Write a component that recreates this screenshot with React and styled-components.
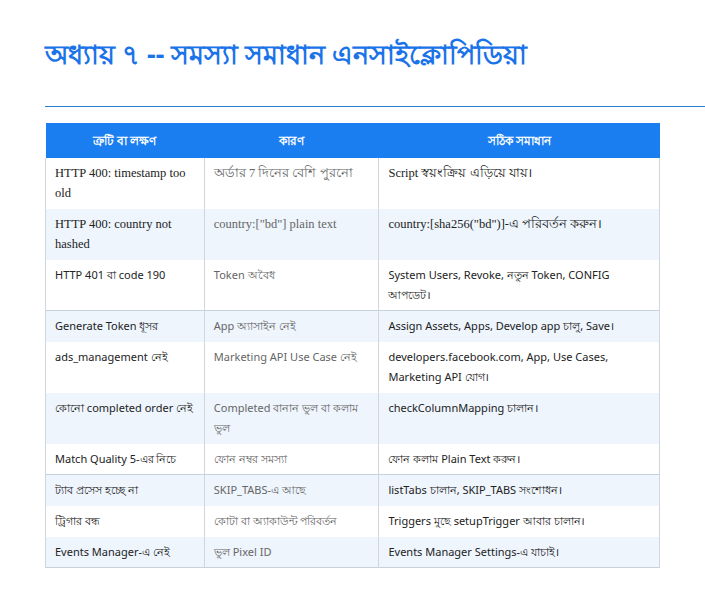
import React from "react";
import styled, { createGlobalStyle } from "styled-components";

const G = createGlobalStyle`
  body { margin: 0; background: #fff; font-family: "Noto Sans", "Open Sans", sans-serif; }
`;
const Page = styled.div`
  padding: 34px 0 0 45px;
`;
const Title = styled.h1`
  margin: 0;
  font-family: "Noto Sans", sans-serif;
  font-weight: 700;
  font-size: 27px;
  line-height: 40px;
  color: #1a73e8;
`;
const Rule = styled.hr`
  margin: 32px 0 16px 0;
  border: 0;
  border-top: 1px solid #2a7fd4;
`;
const Table = styled.table`
  width: 615px;
  border-collapse: collapse;
  line-height: 20px;
`;
const Th = styled.th`
  background: #1a7ef0;
  color: #fff;
  font-weight: 700;
  font-size: 11.5px;
  height: 35px;
  padding: 0 8px;
  text-align: center;
`;
const Tr = styled.tr`
  background: ${(p) => (p.$alt ? "#eef5fd" : "#fff")};
  border-bottom: 1px solid ${(p) => (p.$line ? "#c8d2dc" : "transparent")};
`;
const Td = styled.td`
  vertical-align: top;
  padding: 5px 6px 5px 9px;
  color: ${(p) => (p.$muted ? "#666" : "#222")};
  border-left: 1px solid #d0d6dc;
  border-right: 1px solid #d0d6dc;
  font-family: ${(p) => (p.$serif ? '"Liberation Serif", "Noto Sans", serif' : '"Noto Sans", sans-serif')};
  font-size: ${(p) => (p.$serif ? "12.5px" : "11px")};
`;

const rows = [
  ["HTTP 400: timestamp too old", "অর্ডার 7 দিনের বেশি পুরনো", "Script স্বয়ংক্রিয় এড়িয়ে যায়।", 1],
  ["HTTP 400: country not hashed", 'country:["bd"] plain text', 'country:[sha256("bd")]-এ পরিবর্তন করুন।', 1],
  ["HTTP 401 বা code 190", "Token অবৈধ", "System Users, Revoke, নতুন Token, CONFIG আপডেট।", 0],
  ["Generate Token ধূসর", "App অ্যাসাইন নেই", "Assign Assets, Apps, Develop app চালু, Save।", 0],
  ["ads_management নেই", "Marketing API Use Case নেই", "developers.facebook.com, App, Use Cases, Marketing API যোগ।", 0],
  ["কোনো completed order নেই", "Completed বানান ভুল বা কলাম ভুল", "checkColumnMapping চালান।", 0],
  ["Match Quality 5-এর নিচে", "ফোন নম্বর সমস্যা", "ফোন কলাম Plain Text করুন।", 0],
  ["ট্যাব প্রসেস হচ্ছে না", "SKIP_TABS-এ আছে", "listTabs চালান, SKIP_TABS সংশোধন।", 0],
  ["ট্রিগার বন্ধ", "কোটা বা অ্যাকাউন্ট পরিবর্তন", "Triggers মুছে setupTrigger আবার চালান।", 0],
  ["Events Manager-এ নেই", "ভুল Pixel ID", "Events Manager Settings-এ যাচাই।", 0],
];

export default function App() {
  return (
    <Page>
      <G />
      <Title>অধ্যায় ৭ -- সমস্যা সমাধান এনসাইক্লোপিডিয়া</Title>
      <Rule />
      <Table>
        <colgroup>
          <col style={{ width: 159 }} />
          <col style={{ width: 175 }} />
          <col style={{ width: 281 }} />
        </colgroup>
        <thead>
          <tr>
            <Th>ত্রুটি বা লক্ষণ</Th>
            <Th>কারণ</Th>
            <Th>সঠিক সমাধান</Th>
          </tr>
        </thead>
        <tbody>
          {rows.map((r, i) => (
            <Tr key={i} $alt={i % 2 === 1} $line={i === 2 || i === 6 || i === 9}>
              <Td $serif={r[3]}>{r[0]}</Td>
              <Td $serif={r[3]} $muted>{r[1]}</Td>
              <Td $serif={r[3]}>{r[2]}</Td>
            </Tr>
          ))}
        </tbody>
      </Table>
    </Page>
  );
}
